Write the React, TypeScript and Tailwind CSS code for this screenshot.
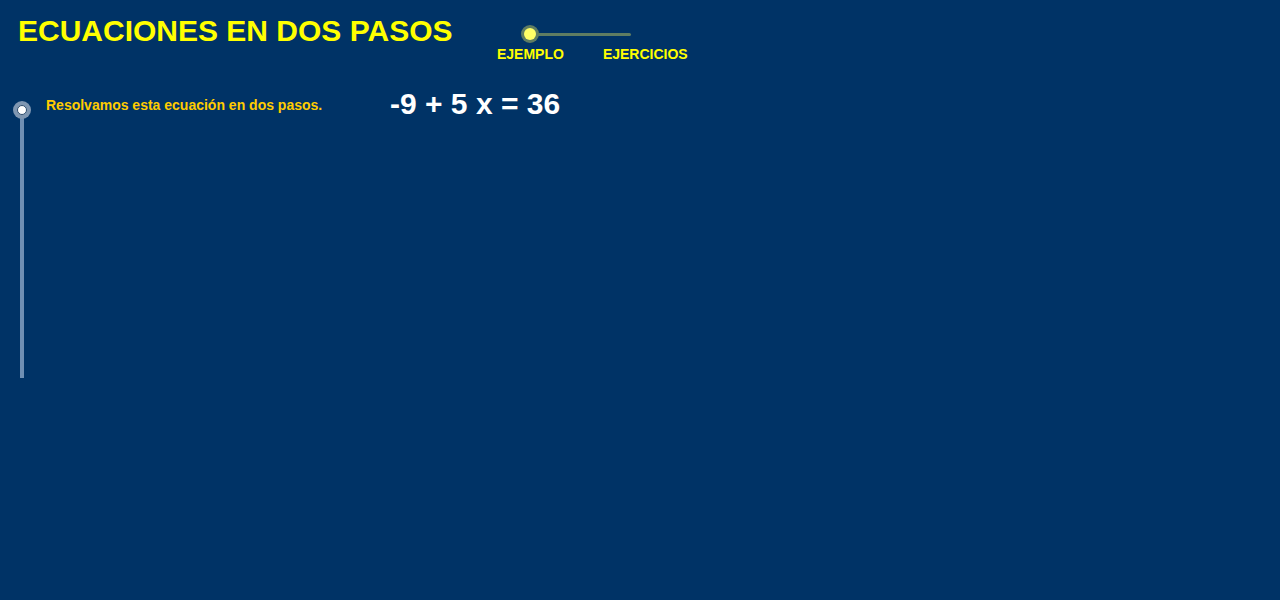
export default function App() {
  const font = { fontFamily: '"Liberation Sans", Arial, sans-serif' };
  return (
    <div className="h-[600px] w-[1280px] overflow-hidden bg-[#003366]" style={font}>
      {/* header */}
      <div className="flex h-[88px] items-start pl-[18px] pt-[16px]">
        <h1 className="w-[479px] text-[30px] font-bold leading-none text-[#ffff00]">ECUACIONES EN DOS PASOS</h1>
        <div className="mt-[9px] flex flex-col">
          <div className="flex items-center pl-[24px]">
            <div className="relative z-10 flex h-[18px] w-[18px] items-center justify-center rounded-full bg-[#5f7d62]">
              <div className="h-[12px] w-[12px] rounded-full bg-[#ffff66]" />
            </div>
            <div className="-ml-[9px] h-[3px] w-[101px] rounded-full bg-[#5f7d62]" />
          </div>
          <div className="mt-[4px] flex gap-[39px] text-[14px] font-bold leading-none text-[#ffff00]">
            <span>EJEMPLO</span>
            <span>EJERCICIOS</span>
          </div>
        </div>
      </div>

      {/* body */}
      <div className="flex items-start pl-[13px]">
        <div className="mt-[13px] flex w-[18px] flex-col items-center">
          <div className="relative z-10 flex h-[18px] w-[18px] items-center justify-center rounded-full bg-[#7f97b2]">
            <div className="h-[10px] w-[10px] rounded-full border border-[#2f4f6f] bg-white" />
          </div>
          <div className="-mt-[9px] h-[268px] w-[4px] bg-[#6f8fb3]" />
        </div>
        <p className="ml-[15px] mt-[10px] w-[344px] text-[14px] font-bold leading-none text-[#ffcc00]">
          Resolvamos esta ecuación en dos pasos.
        </p>
        <p className="mt-[1px] text-[30px] font-bold leading-none text-white">-9 + 5 x = 36</p>
      </div>
    </div>
  );
}
